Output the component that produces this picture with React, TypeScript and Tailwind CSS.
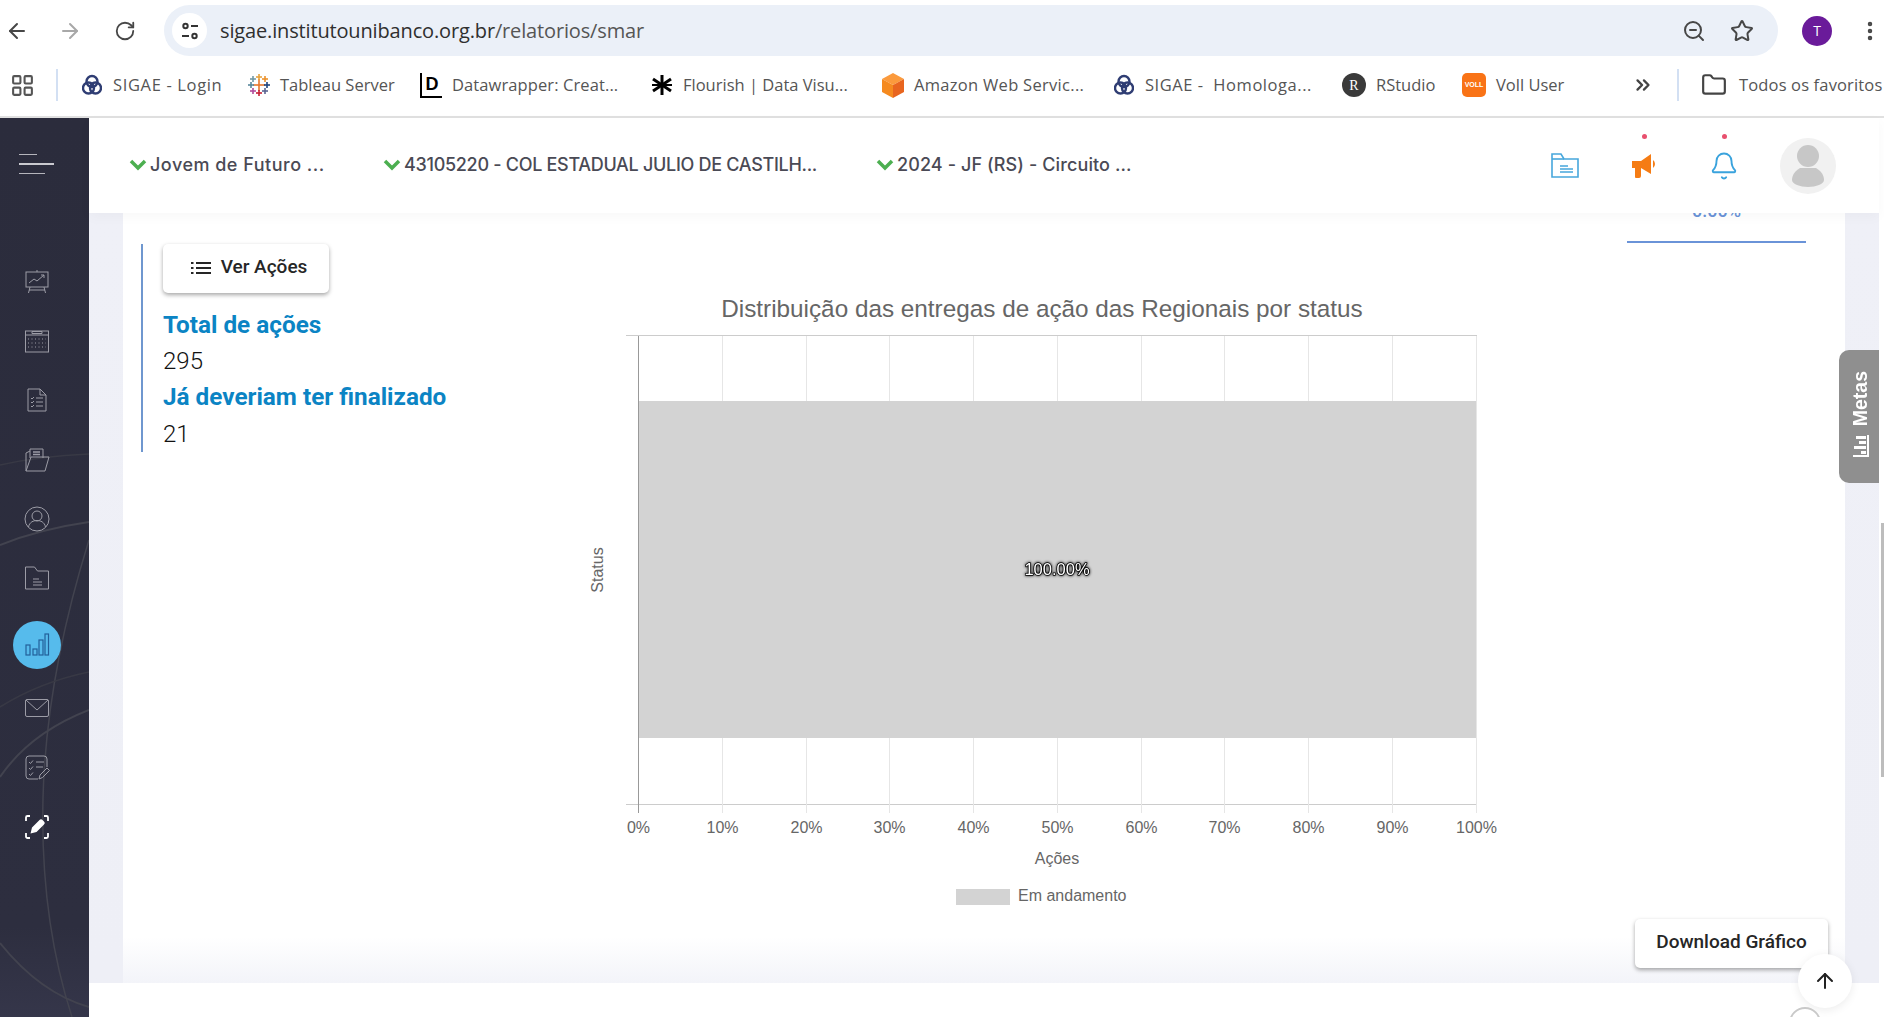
import React from 'react';
import {
  ArrowLeft,
  ArrowRight,
  RotateCw,
  ZoomOut,
  Star,
  EllipsisVertical,
  LayoutGrid,
  ChevronsRight,
  Folder,
  ArrowUp,
  Bell,
} from 'lucide-react';

const chromeFont = "font-['Open_Sans',sans-serif]";

function SigaeLogo() {
  return (
    <svg width="20" height="22" viewBox="0 0 20 22" fill="none" stroke="#2f3d73" strokeWidth="2.4">
      <circle cx="10" cy="7.5" r="5.5" />
      <circle cx="6.5" cy="14" r="5.5" />
      <circle cx="13.5" cy="14" r="5.5" />
    </svg>
  );
}

function TableauLogo() {
  const crosses = [
    [11, 11, 6, '#e8762b'],
    [11, 3, 3, '#e8a33d'],
    [11, 19, 3, '#c72035'],
    [3, 11, 3, '#59879b'],
    [19, 11, 3, '#1f447e'],
    [5, 5, 3, '#7099a6'],
    [17, 5, 3, '#eb912b'],
    [5, 17, 3, '#b14c9b'],
    [17, 17, 3, '#5b6591'],
  ] as const;
  return (
    <svg width="22" height="22" viewBox="0 0 22 22" strokeWidth="1.6">
      {crosses.map(([x, y, s, c]) => (
        <g key={`${x}-${y}`} stroke={c}>
          <line x1={x - s} y1={y} x2={x + s} y2={y} />
          <line x1={x} y1={y - s} x2={x} y2={y + s} />
        </g>
      ))}
    </svg>
  );
}

function DatawrapperLogo() {
  return (
    <span className="relative flex h-[25px] w-[22px] items-center justify-center border-b-2 border-l-2 border-black font-['Liberation_Sans',sans-serif] text-[18px] leading-none font-bold text-black">
      D
    </span>
  );
}

function FlourishLogo() {
  return (
    <svg width="20" height="20" viewBox="0 0 20 20" stroke="#000" strokeWidth="3">
      <line x1="10" y1="0" x2="10" y2="20" />
      <line x1="1" y1="4" x2="19" y2="16" />
      <line x1="1" y1="16" x2="19" y2="4" />
      <line x1="0" y1="10" x2="20" y2="10" strokeWidth="2" />
    </svg>
  );
}

function AmazonLogo() {
  return (
    <svg width="22" height="25" viewBox="0 0 22 25">
      <polygon points="11,0 22,6 11,12 0,6" fill="#fb9a3c" />
      <polygon points="0,6 11,12 11,25 0,19" fill="#f58a1f" />
      <polygon points="22,6 11,12 11,25 22,19" fill="#e8651f" />
    </svg>
  );
}

function RStudioLogo() {
  return (
    <span className="flex h-6 w-6 items-center justify-center rounded-full bg-[#3a3a3a] font-['Liberation_Serif',serif] text-[14px] text-white">
      R
    </span>
  );
}

function VollLogo() {
  return (
    <span className="flex h-6 w-6 items-center justify-center rounded-[5px] bg-[#f97316] font-['Liberation_Sans',sans-serif] text-[7px] font-bold text-white">
      VOLL
    </span>
  );
}

const bookmarks = [
  { label: 'SIGAE - Login', icon: <SigaeLogo />, iconBox: 'w-[22px]', left: 'ml-[23px]', width: 'w-[109px] tracking-[0.65px]' },
  { label: 'Tableau Server', icon: <TableauLogo />, iconBox: 'w-[22px]', left: 'ml-[26px]', width: 'w-[115px]' },
  { label: 'Datawrapper: Creat...', icon: <DatawrapperLogo />, iconBox: 'w-[22px]', left: 'ml-[25px]', width: 'w-[167px] tracking-[0.1px]' },
  { label: 'Flourish | Data Visu...', icon: <FlourishLogo />, iconBox: 'w-[22px]', left: 'ml-[32px]', width: 'w-[165px]' },
  { label: 'Amazon Web Servic...', icon: <AmazonLogo />, iconBox: 'w-[22px]', left: 'ml-[34px]', width: 'w-[172px] tracking-[0.3px]' },
  { label: 'SIGAE -  Homologa...', icon: <SigaeLogo />, iconBox: 'w-[22px]', left: 'ml-[27px]', width: 'w-[168px] tracking-[0.55px]' },
  { label: 'RStudio', icon: <RStudioLogo />, iconBox: 'w-[24px]', left: 'ml-[29px]', width: 'w-[62px]' },
  { label: 'Voll User', icon: <VollLogo />, iconBox: 'w-[24px]', left: 'ml-[24px]', width: 'w-[72px]' },
];

function BrowserBar() {
  return (
    <div className={`flex h-[118px] shrink-0 flex-col border-b-2 border-[#e0e0e0] bg-white ${chromeFont}`}>
      <div className="flex h-[61px] items-start pt-[5px]">
        <div className="flex h-[51px] w-[164px] items-center text-[#474747]">
          <ArrowLeft size={24} strokeWidth={2} className="ml-[5px]" />
          <ArrowRight size={24} strokeWidth={2} className="ml-[29px] text-[#a8a8a8]" />
          <RotateCw size={22} strokeWidth={2} className="ml-[32px]" />
        </div>
        <div className="flex h-[51px] w-[1614px] items-center rounded-full bg-[#ebf0f8]">
          <div className="ml-2 flex h-[35px] w-[35px] items-center justify-center rounded-full bg-white">
            <svg width="18" height="18" viewBox="0 0 18 18" fill="none" stroke="#333" strokeWidth="2">
              <circle cx="4.5" cy="4" r="2.2" />
              <line x1="10" y1="4" x2="17" y2="4" />
              <circle cx="13.5" cy="14" r="2.2" />
              <line x1="1" y1="14" x2="8" y2="14" />
            </svg>
          </div>
          <span className="ml-[13px] text-[20px] leading-none tracking-[-0.15px] text-[#2f2f2f]">
            sigae.institutounibanco.org.br<span className="text-[#555]">/relatorios/smar</span>
          </span>
          <ZoomOut size={24} strokeWidth={2} className="ml-auto text-[#474747]" />
          <Star size={24} strokeWidth={2} className="mr-[24px] ml-[24px] text-[#474747]" />
        </div>
        <div className="ml-[24px] flex h-[51px] items-center">
          <span className="flex h-[30px] w-[30px] items-center justify-center rounded-full bg-[#6a1b9a] text-[14px] text-white">
            T
          </span>
          <EllipsisVertical size={24} strokeWidth={2.5} className="ml-[26px] shrink-0 text-[#474747]" />
        </div>
      </div>
      <div className="flex h-[55px] items-center overflow-hidden pb-[7px] text-[16.5px] whitespace-nowrap text-[#555]">
        <LayoutGrid size={25} strokeWidth={2} className="ml-[10px] shrink-0 text-[#555]" />
        <span className="ml-[21px] h-[32px] w-[2px] shrink-0 bg-[#d3e0f3]" />
        {bookmarks.map((b) => (
          <div key={b.label} className={`flex shrink-0 items-center ${b.left}`}>
            <span className={`flex shrink-0 justify-center ${b.iconBox}`}>{b.icon}</span>
            <span className={`ml-[10px] ${b.width} whitespace-pre`}>{b.label}</span>
          </div>
        ))}
        <ChevronsRight size={22} strokeWidth={2.5} className="ml-[64px] shrink-0 text-[#444]" />
        <span className="ml-[23px] h-[32px] w-[2px] shrink-0 bg-[#d3e0f3]" />
        <Folder size={26} strokeWidth={2} className="ml-[22px] shrink-0 text-[#444]" />
        <span className="ml-[12px] shrink-0 tracking-[0.15px]">Todos os favoritos</span>
      </div>
    </div>
  );
}

const navStroke = { fill: 'none', stroke: '#9c9ca6', strokeWidth: 1 };

const navIcons = [
  <svg key="board" width="26" height="26" viewBox="0 0 26 26" {...navStroke}>
    <rect x="2" y="3" width="22" height="15" />
    <line x1="13" y1="1" x2="13" y2="3" />
    <path d="M6 18l-1.5 6M20 18l1.500 6M5 21h16" />
    <path d="M5 14l5-4 3 2 7-6M17 6h3v3" />
  </svg>,
  <svg key="calendar" width="26" height="26" viewBox="0 0 26 26" {...navStroke}>
    <rect x="1.500" y="3" width="23" height="21" />
    <line x1="1.500" y1="7" x2="24.500" y2="7" />
    <path d="M8 3.500h10v2H8z" />
    <path d="M4 11h18M4 15h18M4 19h18" strokeDasharray="1 2.500" />
  </svg>,
  <svg key="list" width="26" height="26" viewBox="0 0 26 26" {...navStroke}>
    <path d="M4 2h12l6 6v16H4z" />
    <path d="M16 2v6h6" />
    <path d="M7 11l1 1 2-2M7 15l1 1 2-2M7 19l1 1 2-2M12 11h7M12 15h7M12 19h7" />
  </svg>,
  <svg key="open-folder" width="26" height="26" viewBox="0 0 26 26" {...navStroke}>
    <path d="M6 11V2h13v9" />
    <path d="M2 24V6l4-2M2 24h19l4-14H7l-5 14z" />
    <path d="M9 5h7M9 7.500h7" strokeWidth="1.400" />
  </svg>,
  <svg key="user" width="26" height="26" viewBox="0 0 26 26" {...navStroke}>
    <circle cx="13" cy="13" r="12" />
    <circle cx="13" cy="10" r="5" />
    <path d="M4.500 21c1-5 5-6.500 8.500-6.500s7.500 1.500 8.500 6.500" />
  </svg>,
  <svg key="folder" width="26" height="26" viewBox="0 0 26 26" {...navStroke}>
    <path d="M1.500 2h9l3 4h11v18h-23z" />
    <path d="M9 14h6M9 17h9M9 20h9" />
  </svg>,
];

const navIconsBottom = [
  <svg key="mail" width="26" height="26" viewBox="0 0 26 26" {...navStroke}>
    <rect x="1.500" y="4.500" width="23" height="17" rx="1.500" />
    <path d="M2 5l11 10L24 5" />
  </svg>,
  <svg key="checks" width="26" height="26" viewBox="0 0 26 26" {...navStroke}>
    <path d="M14 24H5a3 3 0 0 1-3-3V4a3 3 0 0 1 3-3h15a3 3 0 0 1 3 3v8" />
    <path d="M5 7l1.500 1.500L9 5.500M5 13l1.500 1.500L9 11.500M5 19l1.500 1.500L9 17.500M12 7h8M12 12h7" />
    <path d="M15 24l1-4 7-7 2.500 2.500-7 7z" />
  </svg>,
  <svg key="pen" width="26" height="26" viewBox="0 0 26 26" fill="none" stroke="#fff" strokeWidth="1.800">
    <path d="M2 7V3.500A1.500 1.500 0 0 1 3.500 2H6M20 2h2.500A1.500 1.500 0 0 1 24 3.500V7M24 19v3.500a1.500 1.500 0 0 1-1.500 1.500H20M6 24H3.500A1.500 1.500 0 0 1 2 22.500V19" />
    <path d="M6.500 19.500l1.500-6L15.500 6a2 2 0 0 1 3 0l1.500 1.500a2 2 0 0 1 0 3L12.500 18z" fill="#fff" stroke="none" />
  </svg>,
];

function Sidebar() {
  return (
    <aside className="relative flex w-[89px] shrink-0 flex-col overflow-hidden bg-gradient-to-b from-[#2b2c3c] via-[#2d2e3f] via-[90%] to-[#35364a] pl-[13px]">
      <svg className="absolute top-0 left-0 h-full w-full" viewBox="0 0 89 899" preserveAspectRatio="none" fill="none" stroke="#42434f" strokeWidth="1.500">
        <path d="M0 347q40-9 89-11" stroke="#383945" />
        <path d="M0 427q40-16 89-23" strokeWidth="2" />
        <path d="M89 422Q46 560 43 680T72 899" />
        <path d="M0 589q40-25 89-35" stroke="#383945" />
        <path d="M89 592Q30 615 0 659" strokeWidth="2" />
        <path d="M0 825q40 50 89 64" strokeWidth="2" />
      </svg>
      <div className="relative ml-[6px] flex h-[95px] flex-col justify-center gap-2 pb-1">
        <span className="block h-px w-[18px] bg-[#b5b5bc]" />
        <span className="block h-[2px] w-[35px] bg-[#c9c9cf]" />
        <span className="block h-px w-[26px] bg-[#b5b5bc]" />
      </div>
      <nav className="relative mt-[39px] flex flex-col">
        {navIcons.map((icon) => (
          <div key={icon.key} className="flex h-[59.3px] w-12 items-center justify-center">
            {icon}
          </div>
        ))}
        <div className="mt-[13px] flex h-[48px] w-12 items-center justify-center rounded-full bg-[#56bbec]">
          <svg width="26" height="26" viewBox="0 0 26 26" fill="none" stroke="#22609a" strokeWidth="1.200">
            <rect x="2" y="13" width="4" height="10" />
            <rect x="9" y="17" width="4" height="6" />
            <rect x="15" y="8" width="4" height="15" />
            <rect x="21" y="2" width="3.500" height="21" />
          </svg>
        </div>
        {navIconsBottom.map((icon, i) => (
          <div key={icon.key} className={`flex h-[59.3px] w-12 items-center justify-center ${i === 0 ? 'mt-[10px]' : ''}`}>
            {icon}
          </div>
        ))}
      </nav>
    </aside>
  );
}

function Chevron() {
  return (
    <svg width="18" height="13" viewBox="0 0 18 13" fill="none" stroke="#4caf50" strokeWidth="3.500">
      <path d="M2 3l7 7 7-7" />
    </svg>
  );
}

const selects = [
  { label: 'Jovem de Futuro ...', width: 'w-[254px]', track: 'tracking-[0.5px]' },
  { label: '43105220 - COL ESTADUAL JULIO DE CASTILH...', width: 'w-[493px]', track: 'tracking-[-0.3px]' },
  { label: '2024 - JF (RS) - Circuito ...', width: 'w-[260px]', track: 'tracking-[0.1px]' },
];

function TopHeader() {
  return (
    <header className="relative z-10 flex h-[95px] shrink-0 items-center bg-white pl-[40px] shadow-[0_4px_12px_rgba(0,0,0,0.03)]">
      {selects.map((s) => (
        <div key={s.label} className={`flex shrink-0 items-center gap-[3px] pb-[3px] ${s.width}`}>
          <Chevron />
          <span className={`font-['Inter',sans-serif] text-[18px] font-medium whitespace-nowrap text-[#4a4a55] ${s.track}`}>
            {s.label}
          </span>
        </div>
      ))}
      <div className="ml-auto flex items-center pr-[43px]">
        <svg width="28" height="25" viewBox="0 0 28 25" fill="none" stroke="#47a7dc" strokeWidth="1.600">
          <path d="M1 1h9l3 5h14v18H1z" />
          <path d="M1 6h12" />
          <path d="M9 13h8M9 16h13M9 19h13" strokeWidth="1.500" />
        </svg>
        <div className="relative ml-[51.5px] flex">
          <svg width="28" height="24" viewBox="0 0 28 24" fill="#f57c14">
            <path d="M1 7h9l10-7v20L10 14v8a2 2 0 0 1-2 2H5a1 1 0 0 1-1-1v-9H1z" />
            <path d="M22 6a5 5 0 0 1 0 8z" />
          </svg>
          <span className="absolute top-[-20px] left-[11.5px] h-[5px] w-[5px] rounded-full bg-[#e8506e]" />
        </div>
        <div className="relative ml-[50.5px] flex">
          <Bell size={30} strokeWidth={1.500} className="text-[#3aa3dd]" />
          <span className="absolute top-[-17px] left-[12.5px] h-[5px] w-[5px] rounded-full bg-[#e8506e]" />
        </div>
        <div className="ml-[41px] flex h-[56px] w-[56px] items-center justify-center rounded-full bg-[#f1f1f1]">
          <svg width="32" height="42" viewBox="0 0 32 42" fill="#c7c7c7">
            <circle cx="16" cy="11" r="11" />
            <path d="M8 23h16c5 3 8 7 8 12 0 4-8 7-16 7S0 39 0 35c0-5 3-9 8-12z" />
          </svg>
        </div>
      </div>
    </header>
  );
}

const ticks = [0, 10, 20, 30, 40, 50, 60, 70, 80, 90, 100];

function StatusChart() {
  // viewBox uses the same numbers as the page so the plot lines up with the picture
  return (
    <svg
      className="mt-[77px] block shrink-0 font-['Liberation_Sans',sans-serif]"
      width="960"
      height="640"
      viewBox="560 290 960 640"
      fill="#666"
    >
      <text x="1042" y="317" fontSize="24.3" textAnchor="middle">
        Distribuição das entregas de ação das Regionais por status
      </text>
      <line x1="626" y1="335.500" x2="1477" y2="335.500" stroke="#ccc" />
      <line x1="626" y1="804.500" x2="1477" y2="804.500" stroke="#ccc" />
      {ticks.map((t) => {
        const x = Math.round(638 + t * 8.375) + 0.5;
        return (
          <g key={t}>
            <line x1={x} y1="336" x2={x} y2="813" stroke={t === 0 ? '#999' : '#e6e6e6'} />
            <text x={x} y="833" fontSize="16" textAnchor="middle">
              {t}%
            </text>
          </g>
        );
      })}
      <rect x="639" y="401" width="837" height="337" fill="#d3d3d3" />
      <text
        x="1057"
        y="575"
        fontSize="16.5"
        textAnchor="middle"
        fill="#fff"
        stroke="#000"
        strokeWidth="1.500"
        strokeLinejoin="round"
        paintOrder="stroke"
        className="[filter:drop-shadow(0_0_1.5px_#000)]"
      >
        100.00%
      </text>
      <text x="1057" y="864" fontSize="16" textAnchor="middle">
        Ações
      </text>
      <text x="0" y="0" fontSize="16" textAnchor="middle" transform="translate(603 570) rotate(-90)">
        Status
      </text>
      <rect x="956" y="889" width="54" height="16" fill="#d3d3d3" />
      <text x="1018" y="901" fontSize="16">
        Em andamento
      </text>
    </svg>
  );
}

function LeftSummary() {
  return (
    <div className="w-[437px] shrink-0 pt-[31px] pl-[18px] font-['Roboto',sans-serif]">
      <div className="flex h-[208px] flex-col items-start border-l-2 border-[#6f97cf] pl-5">
        <button className="flex h-[49px] w-[166px] items-center justify-center gap-[10px] rounded-[5px] bg-white pb-[2px] pl-[6px] text-[19px] font-medium text-[#262626] shadow-[0_2px_4px_rgba(0,0,0,0.35)]">
          <svg width="20" height="14" viewBox="0 0 20 14" fill="#262626">
            <rect x="0" y="1" width="2.500" height="2" />
            <rect x="0" y="6" width="2.500" height="2" />
            <rect x="0" y="11" width="2.500" height="2" />
            <rect x="5" y="1" width="15" height="2" />
            <rect x="5" y="6" width="15" height="2" />
            <rect x="5" y="11" width="15" height="2" />
          </svg>
          Ver Ações
        </button>
        <p className="mt-[17px] text-[24.3px] leading-[30px] font-bold text-[#0b84c4]">Total de ações</p>
        <p className="mt-[6px] text-[24px] leading-[30px] font-light text-[#111]">295</p>
        <p className="mt-[6px] text-[24.3px] leading-[30px] font-bold text-[#0b84c4]">Já deveriam ter finalizado</p>
        <p className="mt-[7px] text-[24px] leading-[30px] font-light text-[#111]">21</p>
      </div>
    </div>
  );
}

function RightColumn() {
  return (
    <div className="flex min-w-0 flex-1 flex-col pr-[17px] pb-[15px] font-['Roboto',sans-serif]">
      <div className="ml-[107px] h-[30px] w-[179px] border-b-[2.500px] border-[#6a93d8] text-center">
        <span className="-mt-[11px] block text-[18px] leading-[18px] font-medium text-[#6a93d8]">0.00%</span>
      </div>
      <button className="mt-auto flex h-[49px] w-[193px] items-center justify-center self-end rounded-[5px] bg-white pb-[2px] text-[19px] font-medium whitespace-nowrap text-[#262626] shadow-[0_2px_4px_rgba(0,0,0,0.35)]">
        Download Gráfico
      </button>
    </div>
  );
}

export default function App() {
  return (
    <div className="flex h-[1017px] w-[1884px] flex-col overflow-hidden bg-white">
      <BrowserBar />
      <div className="flex min-h-0 flex-1">
        <Sidebar />
        <div className="relative flex w-[1790px] shrink-0 flex-col">
          <TopHeader />
          <div className="flex h-[770px] shrink-0 bg-gradient-to-b from-[#eff0f7] to-[#eeeff6] px-[34px]">
            <div className="flex w-[1722px] bg-gradient-to-b from-white from-[94%] to-[#f3f4f9]">
              <LeftSummary />
              <StatusChart />
              <RightColumn />
            </div>
          </div>
          <div className="flex-1 bg-white" />

          {/* floating bits that sit over the page */}
          <button className="absolute top-[232px] right-0 flex h-[133px] w-[40px] flex-col items-center justify-center gap-[9px] rounded-l-[10px] bg-[#8f8f8f] pb-[5px] pl-[3px] font-['Liberation_Sans',sans-serif] text-white">
            <span className="rotate-180 text-[19.5px] leading-none font-bold [writing-mode:vertical-rl]">Metas</span>
            <svg width="16" height="22" viewBox="0 0 16 22" fill="#fff">
              <rect x="0" y="20" width="16" height="2" />
              <rect x="14" y="0" width="2" height="22" />
              <rect x="3" y="1" width="10" height="3" />
              <rect x="6" y="6" width="7" height="3" />
              <rect x="1" y="11" width="12" height="3" />
              <rect x="8" y="16" width="5" height="3" />
            </svg>
          </button>
          <button className="absolute right-[27px] bottom-[9px] flex h-[54px] w-[54px] items-center justify-center rounded-full bg-white shadow-[0_2px_10px_rgba(0,0,0,0.08)]">
            <ArrowUp size={24} strokeWidth={2} className="text-[#222]" />
          </button>
          <span className="absolute right-[58px] bottom-[-22px] h-[32px] w-[32px] rounded-full border-2 border-[#c9c9c9] bg-white" />
        </div>
        <div className="w-[5px] shrink-0 pl-[2px]">
          <div className="mt-[405px] h-[254px] bg-[#bdbdbd]" />
        </div>
      </div>
    </div>
  );
}
